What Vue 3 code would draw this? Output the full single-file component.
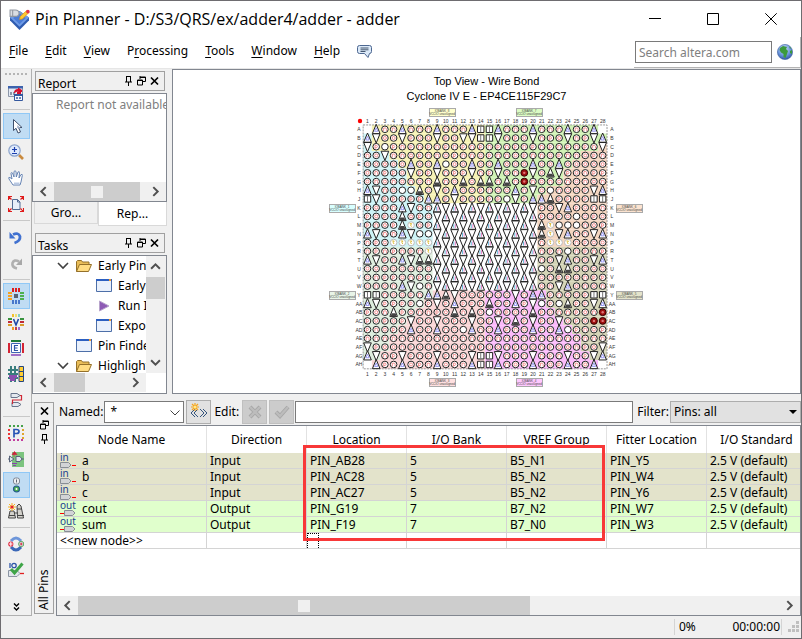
<script setup>
import { ref } from 'vue'

const menus = ['File', 'Edit', 'View', 'Processing', 'Tools', 'Window', 'Help'].map((label) => {
  const at = label === 'Processing' ? 1 : 0
  return { label, pre: label.slice(0, at), key: label[at], post: label.slice(at + 1) }
})

const toolGroups = [
  ['report'],
  ['pointer', 'zoom', 'hand', 'fit'],
  ['undo', 'redo'],
  ['package', 'vref', 'edges', 'pads', 'diff'],
  ['legend', 'dqs', 'banks', 'find'],
  ['refresh', 'check'],
]
const active = ['pointer', 'package', 'banks']

const columns = ['Node Name', 'Direction', 'Location', 'I/O Bank', 'VREF Group', 'Fitter Location', 'I/O Standard']
const nodes = [
  { dir: 'in', cells: ['a', 'Input', 'PIN_AB28', '5', 'B5_N1', 'PIN_Y5', '2.5 V (default)'] },
  { dir: 'in', cells: ['b', 'Input', 'PIN_AC28', '5', 'B5_N2', 'PIN_W4', '2.5 V (default)'] },
  { dir: 'in', cells: ['c', 'Input', 'PIN_AC27', '5', 'B5_N2', 'PIN_Y6', '2.5 V (default)'] },
  { dir: 'out', cells: ['cout', 'Output', 'PIN_G19', '7', 'B7_N2', 'PIN_W7', '2.5 V (default)'] },
  { dir: 'out', cells: ['sum', 'Output', 'PIN_F19', '7', 'B7_N0', 'PIN_W3', '2.5 V (default)'] },
]

const tree = [
  { icon: 'folder', open: true, depth: 0, text: 'Early Pin Planning' },
  { icon: 'window', depth: 1, text: 'Early Pin Planning...' },
  { icon: 'run', depth: 1, text: 'Run I/O Assignment Analysis' },
  { icon: 'window', depth: 1, text: 'Export Pin Assignments...' },
  { icon: 'window', depth: 0, text: 'Pin Finder...' },
  { icon: 'folder', open: true, depth: 0, text: 'Highlight Pins' },
]

const named = ref('*')
const filter = ref('Pins: all')
const edit = ref('')
const query = ref('')

/* Package map. o pin, O unused pin, A/V power and ground, B filled ground,
   S configuration, y clock, R assigned, X no ball */
const pinRows = {
  A: 'XAooAoooAoooASSAoooAoooAooAX',
  B: 'AVooVoooVooVVSSVoooVoooVooVA',
  C: 'VoOooooooooooooooooooooooooV',
  D: 'ooVooooooooooooooooooooooooo',
  E: 'oooooAooAOooAooAoooAooAooooo',
  F: 'oooooVooVoooVooVooRVoBVooooo',
  G: 'ooooooooBooBoBBoBoRooooooooo',
  H: 'AVooOOBoVoAooooooAoVoOooooVA',
  J: 'SVoooooAAoVoooooOVoAABooooSS',
  K: 'ooooAVoo------------ooVAoooo',
  L: 'ooooBooo------------ooooOooo',
  M: 'ooooByoo------------ByOOOooo',
  N: 'AVooAVOO------------ByVAooVA',
  P: 'oooyyyyy------------oyyyoooo',
  R: 'oooooooy------------oooOoooo',
  T: 'AVooAVBB------------ooVAooVA',
  U: 'oooooooo------------OoBBoooo',
  V: 'oooooooo------------oooooooo',
  W: 'ooooAVOo------------ooVAoooo',
  Y: 'SSoooooAABVooooooVoAAoooooSS',
  AA: 'AVooooOoVoAoooBooAoVOoOBooVA',
  AB: 'oooBooooooBoBoOooooBoooooooR',
  AC: 'oooooVooVoooVooVoBoVooVoooRR',
  AD: 'oooooAooAooOAooAoooAooAOoooo',
  AE: 'oooooooooooooooooooooooooooo',
  AF: 'VooooooooooooooooooooooooooV',
  AG: 'AVooVoooVoooVSSVoooVoooVooVA',
  AH: 'XAooAoooAoooASSAoooAoooAooAX',
}
/* [last column of the left bank, first column of the right bank] */
const edges = [
  [0, 29], [1, 29], [1, 28], [3, 26], [4, 25], [5, 24], [5, 24], [6, 22], [7, 21], [8, 21],
  [8, 21], [8, 21], [8, 21], [8, 21], [8, 21], [8, 21], [8, 21], [8, 21], [8, 21], [8, 22],
  [7, 22], [6, 23], [5, 24], [4, 25], [3, 26], [3, 26], [2, 27], [1, 28],
]
const pitch = 8.71
const x0 = 40.5
const y0 = 25.3
const names = Object.keys(pinRows)
const axis = Array.from({ length: 28 }, (_, i) => ({ n: i + 1, x: x0 + i * pitch }))
const sides = names.map((n, i) => ({ n, y: y0 + i * pitch }))

function bankOf(r, c) {
  const [l, rt] = edges[r]
  if (c <= l) return r < 14 ? 'b1' : 'b2'
  if (c >= rt) return r < 14 ? 'b6' : 'b5'
  if (r < 9) return c < 15 ? 'b8' : 'b7'
  if (r < 19) return 'core'
  return c < 15 ? 'b3' : 'b4'
}

const fills = []
const pins = []
names.forEach((name, r) => {
  let run = null
  for (let c = 1; c <= 28; c++) {
    let k = pinRows[name][c - 1]
    const x = x0 + (c - 1) * pitch
    const y = y0 + r * pitch
    const bank = k === 'X' ? 'core' : bankOf(r, c)
    if (run && run.bank === bank) run.w += pitch
    else {
      run = { bank, x: x - pitch / 2, y: y - pitch / 2, w: pitch }
      fills.push(run)
    }
    const core = k === '-'
    if (core) k = (r + c) % 2 === 0 ? 'A' : 'V'
    if (k !== 'X') pins.push({ k, core, x, y, v: (r * 5 + c * 3 + ((r * c) % 4)) % 3 })
  }
})

const tags = [
  { x: 102, y: 4, n: 8, fill: '#ffffcc' },
  { x: 189, y: 4, n: 7, fill: '#dcfcc4' },
  { x: 2, y: 100, n: 1, fill: '#d8ffff' },
  { x: 289, y: 100, n: 6, fill: '#fbe3d0' },
  { x: 2, y: 187, n: 2, fill: '#e8f4e8' },
  { x: 289, y: 187, n: 5, fill: '#e3e3cb' },
  { x: 102, y: 274, n: 3, fill: '#ffe0e0' },
  { x: 189, y: 274, n: 4, fill: '#ffc8ff' },
]
</script>

<template>
  <div class="window">
    <header class="titlebar">
      <svg class="app-icon" viewBox="0 0 20 20">
        <path d="M1 8 10 2l9 6v3l-9 9-9-9z" fill="#2f5cb0" />
        <path d="M1 8 10 2l9 6-9 9z" fill="#6f9be6" />
        <path d="M4 8.500 10 4l6 4.500-6 6z" fill="#4a7cd6" />
        <path d="M1 1h5q3.500 0 3.500 3T6 7H1zM9.500 4h3" fill="#d9dde3" stroke="#9096a0" />
        <path d="M3.500 1v6" stroke="#9096a0" />
        <path d="m10 10 .8-3 6-5.500 2 2-6 6z" fill="#ffc930" stroke="#d98d14" stroke-width=".6" />
        <circle cx="18" cy="2.500" r="1.700" fill="#e2334a" />
      </svg>
      <h1>Pin Planner - D:/S3/QRS/ex/adder4/adder - adder</h1>
      <div class="window-buttons">
        <button aria-label="Minimize"><svg viewBox="0 0 12 12"><path d="M0 5.500h12" /></svg></button>
        <button aria-label="Maximize"><svg viewBox="0 0 12 12"><path d="M.5.5h11v11H.5z" /></svg></button>
        <button aria-label="Close"><svg viewBox="0 0 12 12"><path d="m.3.3 11.4 11.4M11.7.3.3 11.7" /></svg></button>
      </div>
    </header>

    <div class="menubar">
      <nav>
        <a v-for="m in menus" :key="m.label" href="#">{{ m.pre }}<u>{{ m.key }}</u>{{ m.post }}</a>
        <button class="bubble" aria-label="Feedback">
          <svg viewBox="0 0 15 13">
            <path d="M2.500.5h10q2 0 2 2v4q0 2-2 2l-1.500 4-3.500-4h-5q-2 0-2-2v-4q0-2 2-2z" fill="#dbe9f8" stroke="#4d6790" />
            <path d="M3.500 3h8M3.500 4.800h8M3.500 6.500h5" stroke="#33465f" stroke-width=".9" />
          </svg>
        </button>
      </nav>
      <div class="search">
        <input v-model="query" type="text" placeholder="Search altera.com" aria-label="Search altera.com" />
        <button aria-label="Go">
          <svg viewBox="0 0 16 16">
            <defs>
              <radialGradient id="sea" cx=".45" cy=".3" r=".7">
                <stop offset="0" stop-color="#cfe0fb" />
                <stop offset=".6" stop-color="#6d97dc" />
                <stop offset="1" stop-color="#3057a4" />
              </radialGradient>
            </defs>
            <circle cx="8" cy="8" r="7.600" fill="url(#sea)" stroke="#3d5f9f" stroke-width=".6" />
            <path d="m3 4 3-2 4 1-1 2 2 2-1 3-1.500 4-2-1V10L4 8.500 2.500 6zM13 7l2-1v4l-2-1zM12 2l2 2-1 1z" fill="#3c9a3c" />
          </svg>
        </button>
      </div>
    </div>

    <main>
      <aside class="toolbar">
        <div class="grip"></div>
        <div v-for="(group, g) in toolGroups" :key="g" class="tool-group">
          <button v-for="t in group" :key="t" :class="{ on: active.includes(t) }" :aria-label="t">
            <svg v-if="t === 'report'" viewBox="0 0 16 16">
              <path d="M.5 1.500h14v10H.5z" fill="#e4eaf4" stroke="#8c96a8" />
              <path d="M0 1h15v2.500H0z" fill="#3c62ad" />
              <path d="M2 7h2v3H2zM5 7h2v3H5z" fill="#8c96a8" />
              <path d="M6 8q0-4 4-4V2.500L14 5v2h-1v2H9V7h2q-3-1-4 1z" fill="#d5102e" />
              <path d="M6.500 9.500h8v6h-8z" fill="#f6f8fb" stroke="#34589e" />
              <path d="M6 9h9v2H6z" fill="#34589e" /><path d="M8 12h2v2H8zM11 12h2v2h-2z" fill="#6b85ba" />
            </svg>
            <svg v-else-if="t === 'pointer'" viewBox="0 0 16 16">
              <path d="M5.500 1.500v11l2.500-2.200 2 4.700 2.500-1-2-4.500H14z" fill="#fff" stroke="#40506c" />
              <path d="M9 10h3.500L9.500 7z" fill="#a4b2cb" />
            </svg>
            <svg v-else-if="t === 'zoom'" viewBox="0 0 16 16">
              <path d="m11 11 4 4" stroke="#c98a3e" stroke-width="2.600" />
              <circle cx="6.500" cy="6.500" r="5.700" fill="#dfeafc" stroke="#8ca4cc" stroke-width="1.200" />
              <path d="M6.500 3v5M4 5.500h5M4 9.500h5" stroke="#1a3fae" stroke-width="1.200" />
            </svg>
            <svg v-else-if="t === 'hand'" viewBox="0 0 16 16">
              <path d="M5 15 1 9q-1-2 1-1.500L4 9 3 3.500q0-1.500 1.500-.5L6 7V1.500Q7 0 8 1.500L8.300 7 10 2q1.500-1 1.500.7L11 8l2-3.500q1.700-.5 1.300 1L13 12l-1 3z" fill="#fff" stroke="#6684b4" />
              <path d="M6 13.500h5.500" stroke="#b9c8e2" stroke-width="2" />
            </svg>
            <svg v-else-if="t === 'fit'" viewBox="0 0 16 16">
              <path d="M4.500 3.500h5l2.500 2.500v7.500H4.500z" fill="#e8eff9" stroke="#536b93" />
              <path d="M9.500 3.500V6H12" stroke="#536b93" />
              <path d="M.5 4V.5H4M12 .5h3.500V4M15.500 12v3.500H12M4 15.500H.5V12M.5.5l3 3M15.500.5l-3 3M15.500 15.500l-3-3M.5 15.500l3-3" stroke="#e01b1b" stroke-width="1.200" />
            </svg>
            <svg v-else-if="t === 'undo'" viewBox="0 0 16 16">
              <path d="M6.500 14q6-2 5.500-6.500Q10.500 3 5 5.500" stroke="#4071d0" stroke-width="2.800" />
              <path d="M1.500 3v6.500h6z" fill="#4071d0" />
            </svg>
            <svg v-else-if="t === 'redo'" viewBox="0 0 16 16">
              <path d="M9 13.500Q3.500 12 4.500 8 6 4 11 6.500" stroke="#b0b0b0" stroke-width="2.600" />
              <path d="M14 3.500V10H8z" fill="#a8a8a8" />
            </svg>
            <svg v-else-if="t === 'package'" viewBox="0 0 16 16">
              <path d="M5 0v4M8 0v4M11 0v4" stroke="#e01c1c" stroke-width="2" />
              <path d="M5 12v4M8 12v4M11 12v4" stroke="#4878cc" stroke-width="2" />
              <path d="M0 5h4M0 8h4M0 11h4" stroke="#f5a020" stroke-width="2" />
              <path d="M12 5h4M12 8h4M12 11h4" stroke="#4db04d" stroke-width="2" />
              <path d="M6 6h4v4H6z" fill="#5a6270" />
            </svg>
            <svg v-else-if="t === 'vref'" viewBox="0 0 16 16">
              <path d="M5 0v3" stroke="#f3c12c" stroke-width="2" /><path d="M8 0v3" stroke="#ecdf70" stroke-width="2" />
              <path d="M11 0v3" stroke="#83cfc4" stroke-width="2" /><path d="M5 13v3" stroke="#f09828" stroke-width="2" />
              <path d="M8 13v3" stroke="#c84040" stroke-width="2" /><path d="M11 13v3" stroke="#a06ad0" stroke-width="2" />
              <path d="M0 5h4M12 5h4" stroke="#39933d" stroke-width="2" /><path d="M0 8h4M12 8h4" stroke="#c02a38" stroke-width="2" />
              <path d="M0 11h4M12 11h4" stroke="#d99b2b" stroke-width="2" />
              <path d="m5.500 5 2.500 6 2.500-6" stroke="#1d47a8" stroke-width="1.600" />
            </svg>
            <svg v-else-if="t === 'edges'" viewBox="0 0 16 16">
              <path d="M3 0h10v2H3z" fill="#1e7b36" /><path d="M3 14h10v2H3z" fill="#a070c8" />
              <path d="M0 3h2v10H0z" fill="#d42434" /><path d="M14 3h2v10h-2z" fill="#d42434" />
              <path d="M3.500 3.500h9v9h-9z" fill="#fff" stroke="#3f66b5" />
              <path d="M10 5.500H6.500v5H10M6.500 8h3" stroke="#2e54a4" stroke-width="1.200" />
            </svg>
            <svg v-else-if="t === 'pads'" viewBox="0 0 16 16">
              <path d="M3 0v16M7 0v16M0 4h10M0 8h10M0 12h10" stroke="#387d7d" stroke-width="2" />
              <path d="M1 9h8v3H7v3H2v-3H1z" fill="#8a4fae" />
              <path d="M11 .5h4.500v15H11z" fill="#ffce34" stroke="#24457f" /><path d="M11 5.500h5M11 10.500h5" stroke="#24457f" />
            </svg>
            <svg v-else-if="t === 'diff'" viewBox="0 0 16 16">
              <path d="M3 1.500h6l3 2-3 2H3zM4 10.500h6l3 2-3 2H4z" fill="#e4e8ef" stroke="#69758c" />
              <path d="M12 3.500h1.500V8h-9v4" stroke="#cf2734" stroke-width="1.200" />
            </svg>
            <svg v-else-if="t === 'legend'" viewBox="0 0 16 16">
              <path d="M1 1h14" stroke="#45a049" stroke-width="2" stroke-dasharray="2 2" />
              <path d="M1 15h14" stroke="#c23ea0" stroke-width="2" stroke-dasharray="2 2" />
              <path d="M1 4v10" stroke="#e33" stroke-width="2" stroke-dasharray="2 2" />
              <path d="M15 4v10" stroke="#e0a52c" stroke-width="2" stroke-dasharray="2 2" />
              <path d="M6 12.500V4.500h2.500q2.500 0 2.500 2T8.500 8.500H6" stroke="#2755b5" stroke-width="1.700" />
            </svg>
            <svg v-else-if="t === 'dqs'" viewBox="0 0 16 16">
              <path d="M4 1h12v15H4z" fill="#7cc47f" /><path d="M0 8h4M13 8h3" stroke="#59647a" />
              <path d="M1.500 5v6L6 8zM8 5.500h4l2 2.500-2 2.500H8z" fill="#dfe5ee" stroke="#59647a" />
              <path d="M4 3.500 6.500.5 9 3.500zM6 3v3" fill="#d01f3c" stroke="#d01f3c" stroke-width=".6" /><path d="M4 12.500h5M5 14.500h3" stroke="#8a3fb0" />
            </svg>
            <svg v-else-if="t === 'banks'" viewBox="0 0 16 16">
              <rect x="5.500" y="1" width="6" height="6" rx="2" fill="#eef0f3" stroke="#7f8794" />
              <path d="M8.500 2.500v3" stroke="#5d6673" />
              <circle cx="8.500" cy="12" r="3" fill="#4bb04f" stroke="#245a8c" stroke-width="1.200" /><circle cx="8.500" cy="12" r="1" fill="#fff" />
            </svg>
            <svg v-else-if="t === 'find'" viewBox="0 0 16 16">
              <path d="M2 8h4l1.500 7H.5zM9 3l2-2 2 2 2.500 12h-6z" fill="#d4d2cc" stroke="#454545" />
              <path d="M1 12.500h6M9.500 12.500H16M6 10h4M9 6h5" stroke="#454545" stroke-width="1.200" />
              <path d="M4 0v8M0 4h8M1 1l6 6M7 1 1 7" stroke="#f5b120" /><circle cx="4" cy="4" r="1.600" fill="#e8202c" />
            </svg>
            <svg v-else-if="t === 'refresh'" viewBox="0 0 16 16">
              <path d="M3 5q5-6 10 0" stroke="#6d96da" stroke-width="3" />
              <path d="M13 11q-5 6-10 0" stroke="#3b68b8" stroke-width="3" />
              <circle cx="2.800" cy="8" r="2.600" fill="#e12f45" /><circle cx="13.200" cy="8" r="2.600" fill="#e8eef8" stroke="#57a35c" />
              <path d="M2.800 6v4M1 8h3.600" stroke="#fff" /><path d="M11.700 8h3M13.200 6.500v3" stroke="#d02b3c" />
            </svg>
            <svg v-else viewBox="0 0 16 16">
              <path d="M2 1v5" stroke="#2d55a8" stroke-width="1.300" /><circle cx="6" cy="3.500" r="2.200" stroke="#2d55a8" stroke-width="1.300" />
              <path d="M.5 8.500H9l3 3-3 3H.5z" fill="#e2e6ec" stroke="#8b94a3" /><path d="M12 11.500h4" stroke="#e02020" stroke-width="1.300" />
              <path d="m3 7 3.500 4L14.500 1.500" stroke="#3fa548" stroke-width="3" />
            </svg>
          </button>
        </div>
        <button class="more" aria-label="More tools"><svg viewBox="0 0 7 8"><path d="m1 .5 2.500 2.500L6 .5M1 4.500 3.500 7 6 4.500" /></svg></button>
      </aside>

      <div class="workspace">
        <div class="upper">
          <div class="docks">
            <section class="dock">
              <header class="dock-title">
                <h2>Report</h2>
                <button aria-label="Pin"><svg viewBox="0 0 9 10"><path d="M2.500 0v6M1 6h7M6.500 0v6M2 .5h5M4.500 6v4" /></svg></button>
                <button aria-label="Float"><svg viewBox="0 0 9 10"><path d="M3 1h5.500v4.500H6M3 0v3M3 1.500h5.500M.5 4h5v5H.5zM.5 4.500h5" /></svg></button>
                <button aria-label="Close"><svg viewBox="0 0 9 10"><path d="m1 1.500 7 7M8 1.500l-7 7" stroke-width="1.700" /></svg></button>
              </header>
              <div class="panel report">
                <p>Report not available</p>
                <div class="scroll-h">
                  <svg class="arrow" viewBox="0 0 10 10"><path d="M7 1 3 5l4 4" /></svg>
                  <div class="thumb"><i></i></div>
                  <svg class="arrow" viewBox="0 0 10 10"><path d="m3 1 4 4-4 4" /></svg>
                </div>
              </div>
              <div class="tabs">
                <button>Gro...</button>
                <button class="current">Rep...</button>
              </div>
            </section>

            <section class="dock tasks">
              <header class="dock-title">
                <h2>Tasks</h2>
                <button aria-label="Pin"><svg viewBox="0 0 9 10"><path d="M2.500 0v6M1 6h7M6.500 0v6M2 .5h5M4.500 6v4" /></svg></button>
                <button aria-label="Float"><svg viewBox="0 0 9 10"><path d="M3 1h5.500v4.500H6M3 0v3M3 1.500h5.500M.5 4h5v5H.5zM.5 4.500h5" /></svg></button>
                <button aria-label="Close"><svg viewBox="0 0 9 10"><path d="m1 1.500 7 7M8 1.500l-7 7" stroke-width="1.700" /></svg></button>
              </header>
              <div class="panel tree-panel">
                <ul>
                  <li v-for="(n, i) in tree" :key="i" :class="{ child: n.depth }">
                    <span class="twist"><svg v-if="n.open" viewBox="0 0 12 8"><path d="m1 1 5 5 5-5" /></svg></span>
                    <svg v-if="n.icon === 'folder'" class="node-icon" viewBox="0 0 16 16">
                      <path d="M.5 13.500v-10l1-1h4l1 1.500h6.500v3" fill="#e9bd58" stroke="#94702a" />
                      <path d="m.5 13.500 3-7h12l-3 7z" fill="#ffdc82" stroke="#94702a" />
                    </svg>
                    <svg v-else-if="n.icon === 'window'" class="node-icon" viewBox="0 0 16 16">
                      <path d="M.5 1.500h15v12H.5z" fill="#e9f0fb" stroke="#4d6fa8" />
                      <path d="M0 1h16v2H0z" fill="#2c5fc0" /><path d="M13 1h2v2h-2z" fill="#f39a2b" />
                    </svg>
                    <svg v-else class="node-icon" viewBox="0 0 16 16"><path d="M3.500 3v10L13 8z" fill="#8e5bb5" stroke="#b8a4cc" /></svg>
                    {{ n.text }}
                  </li>
                </ul>
                <div class="scroll-v">
                  <svg class="arrow" viewBox="0 0 10 10"><path d="m1 7 4-4 4 4" /></svg>
                  <div class="thumb"></div>
                  <svg class="arrow" viewBox="0 0 10 10"><path d="m1 3 4 4 4-4" /></svg>
                </div>
                <div class="scroll-h">
                  <svg class="arrow" viewBox="0 0 10 10"><path d="M7 1 3 5l4 4" /></svg>
                  <div class="thumb"></div>
                  <svg class="arrow" viewBox="0 0 10 10"><path d="m3 1 4 4-4 4" /></svg>
                </div>
              </div>
            </section>
          </div>

          <section class="chip">
            <p>Top View - Wire Bond</p>
            <p>Cyclone IV E - EP4CE115F29C7</p>
            <svg class="package" viewBox="0 0 320 285" role="img" aria-label="Package pin map">
              <rect v-for="(f, i) in fills" :key="i" :x="f.x" :y="f.y" :width="f.w" :height="pitch" :class="f.bank" />
              <g class="labels">
                <template v-for="a in axis" :key="a.n">
                  <text :x="a.x" y="19">{{ a.n }}</text>
                  <text :x="a.x" y="272">{{ a.n }}</text>
                </template>
                <template v-for="s in sides" :key="s.n">
                  <text x="32" :y="s.y + 2">{{ s.n }}</text>
                  <text x="285" :y="s.y + 2">{{ s.n }}</text>
                </template>
              </g>
              <rect :x="x0 - pitch / 2" :y="y0 - pitch / 2" :width="pitch * 28" :height="pitch * 28" class="outline" />
              <g v-for="(p, i) in pins" :key="i" :transform="`translate(${p.x} ${p.y})`">
                <template v-if="p.k === 'A' || p.k === 'B'">
                  <path d="M0-5 3.800 4.200h-7.600z" class="tri" />
                  <path v-if="p.k === 'B'" d="M-2 1h4l1 3h-6z" fill="#444" />
                  <path v-else-if="p.core" d="M-.8-1v4" stroke="#6bd" />
                  <path v-else d="M0-1.500 1.600 2h-3.200z" class="blue" />
                  <path v-if="p.core" d="M.8-1v4" stroke="#e8c" />
                </template>
                <path v-else-if="p.k === 'V'" d="M0 5-3.800-4.200h7.600z" class="tri" />
                <g v-else-if="p.k === 'S'">
                  <path d="M-3.200-3.200h6.400v6.400h-6.400z" fill="#fff" stroke="#222" /><path d="M0-3v6" stroke="#777" />
                </g>
                <g v-else-if="p.k === 'R'">
                  <circle r="3.400" fill="#a01010" stroke="#300" /><circle r="1.200" fill="#d77" />
                </g>
                <g v-else>
                  <circle r="3.300" :class="p.k === 'y' ? 'clock' : 'pin'" />
                  <path v-if="p.k === 'o' && p.v === 0" d="M-1.300 1.800V-1.300H.6q.9.200.9 1.200v1.900" class="red" />
                  <path v-else-if="p.k === 'o' && p.v === 1" d="M-1.200 2.200v-3.600h1.600q1.500 1.300 0 2.400h-1.300" class="red" />
                  <circle v-else-if="p.k === 'o'" r="1.500" class="red" />
                  <path v-else-if="p.k === 'y'" d="M-1.400-1.500h2l-1 1.500.8 1.500" stroke="#db3" fill="none" />
                </g>
              </g>
              <circle cx="33" cy="17" r="2.200" fill="#f00" />
              <g v-for="t in tags" :key="t.n" :transform="`translate(${t.x} ${t.y})`" class="tag">
                <rect x=".5" y=".5" width="26" height="8" :fill="t.fill" />
                <text x="13" y="4">IOBANK_{{ t.n }}</text>
                <text x="13" y="7">VCCIO unassigned</text>
              </g>
            </svg>
          </section>
        </div>

        <section class="lower">
          <header class="side-title">
            <button aria-label="Close"><svg viewBox="0 0 9 10"><path d="m1 1.500 7 7M8 1.500l-7 7" stroke-width="1.700" /></svg></button>
            <button aria-label="Float"><svg viewBox="0 0 9 10"><path d="M3 1h5.500v4.500H6M3 0v3M3 1.500h5.500M.5 4h5v5H.5zM.5 4.500h5" /></svg></button>
            <button aria-label="Pin"><svg viewBox="0 0 9 10"><path d="M2.500 0v6M1 6h7M6.500 0v6M2 .5h5M4.500 6v4" /></svg></button>
            <h2>All Pins</h2>
          </header>
          <div class="pins">
            <form class="filters" @submit.prevent>
              <label for="named">Named:</label>
              <span class="combo named">
                <select id="named" v-model="named"><option>*</option></select>
                <svg viewBox="0 0 10 6"><path d="m.5.5 4.500 4.500L9.500.5" fill="none" stroke="#444" /></svg>
              </span>
              <button type="button" class="square" aria-label="Node finder">
                <svg viewBox="0 0 18 18">
                  <path d="m8 6-4 4 4 4M5 6l-4 4 4 4M10 6l4 4-4 4M13 6l4 4-4 4" fill="none" stroke="#35557e" />
                  <path d="M5 0v8M1 4h8M2 1l6 6M8 1 2 7" stroke="#f7a51c" stroke-width="1.200" /><circle cx="5" cy="4" r="1.500" fill="#ffe98a" />
                </svg>
              </button>
              <label for="edit" class="edit-label">Edit:</label>
              <button type="button" class="square off" disabled aria-label="Cancel edit">
                <svg viewBox="0 0 18 18"><path d="m4 4 10 10M14 4 4 14" stroke="#a6a6a6" stroke-width="4" /><path d="m4 4 10 10M14 4 4 14" stroke="#bcbcbc" stroke-width="2.400" /></svg>
              </button>
              <button type="button" class="square off" disabled aria-label="Accept edit">
                <svg viewBox="0 0 18 18"><path d="m3 9 4 4 8-9" fill="none" stroke="#a6a6a6" stroke-width="4" /><path d="m3 9 4 4 8-9" fill="none" stroke="#bcbcbc" stroke-width="2.400" /></svg>
              </button>
              <input id="edit" v-model="edit" type="text" />
              <label for="filter">Filter:</label>
              <span class="combo filter">
                <select id="filter" v-model="filter"><option>Pins: all</option></select>
                <svg viewBox="0 0 8 4"><path d="M0 0h8L4 4z" /></svg>
              </span>
            </form>

            <div class="grid">
              <div class="table-area">
                <table>
                  <thead>
                    <tr><th v-for="c in columns" :key="c">{{ c }}</th></tr>
                  </thead>
                  <tbody>
                    <tr v-for="n in nodes" :key="n.cells[0]" :class="n.dir">
                      <td v-for="(c, i) in n.cells" :key="i">
                        <span v-if="i === 0" class="node">
                          <svg v-if="n.dir === 'in'" viewBox="0 0 17 15">
                            <text x="0" y="8">in</text>
                            <path d="M.5 9.500h8l2.500 2.500-2.500 2.500h-8z" fill="#d2d4d6" stroke="#888e94" /><path d="M12 12.500h4" stroke="#f00" />
                          </svg>
                          <svg v-else viewBox="0 0 17 15">
                            <text x="0" y="8">out</text>
                            <path d="M4.500 9.500h8L15 12l-2.500 2.500h-8z" fill="#d2d4d6" stroke="#888e94" /><path d="M0 12.500h4" stroke="#f00" />
                          </svg>
                          {{ c }}
                        </span>
                        <template v-else>{{ c }}</template>
                      </td>
                    </tr>
                    <tr class="new">
                      <td>&lt;&lt;new node&gt;&gt;</td><td></td><td><i class="caret"></i></td><td></td><td></td><td></td><td></td>
                    </tr>
                  </tbody>
                </table>
                <div class="highlight"></div>
              </div>
              <div class="scroll-h">
                <svg class="arrow" viewBox="0 0 10 10"><path d="M7 1 3 5l4 4" /></svg>
                <div class="thumb"><i></i></div>
                <svg class="arrow" viewBox="0 0 10 10"><path d="m3 1 4 4-4 4" /></svg>
              </div>
            </div>
          </div>
        </section>
      </div>
    </main>

    <footer>
      <div class="progress"><span>0%</span><span>00:00:00</span></div>
      <svg viewBox="0 0 12 12"><path d="M8 0h3v3H8zM4 4h3v3H4zM8 4h3v3H8zM0 8h3v3H0zM4 8h3v3H4zM8 8h3v3H8z" fill="#bfbfbf" /></svg>
    </footer>
  </div>
</template>

<style>
body {
  margin: 0;
}
</style>

<style scoped>
* {
  box-sizing: border-box;
}
.window {
  display: flex;
  flex-direction: column;
  height: 100vh;
  min-height: 600px;
  overflow: hidden;
  border: 1px solid #6e6c70;
  background: #f0f0f0;
  color: #000;
  font: 12px/16px "Noto Sans", "Open Sans", sans-serif;
}
button,
input,
select {
  margin: 0;
  padding: 0;
  font: inherit;
  color: inherit;
}
button {
  border: 0;
  background: none;
}
svg {
  display: block;
}
h1,
h2,
p,
ul {
  margin: 0;
  padding: 0;
  font-weight: 400;
}
.titlebar {
  display: flex;
  align-items: center;
  height: 36px;
  padding: 0 1px 0 8px;
  background: #fff;
}
.app-icon {
  width: 21px;
  height: 21px;
  margin-right: 5px;
}
h1 {
  flex: 1;
  font-family: "Open Sans", "Noto Sans", sans-serif;
  font-size: 16px;
  line-height: 24px;
  white-space: nowrap;
}
.window-buttons {
  display: flex;
}
.window-buttons button {
  display: grid;
  place-items: center;
  width: 58px;
  height: 36px;
}
.window-buttons svg {
  width: 12px;
  height: 12px;
  fill: none;
  stroke: #000;
}
.menubar {
  display: flex;
  justify-content: space-between;
  height: 32px;
  background: #fff;
  border-bottom: 1px solid #e6e6e6;
}
.menubar nav {
  display: flex;
  gap: 17px;
  height: 28px;
  align-items: center;
  padding-left: 8px;
}
.menubar a {
  color: #000;
  text-decoration: none;
}
u {
  text-underline-offset: 2px;
}
.bubble svg {
  width: 15px;
  height: 13px;
}
.search {
  display: flex;
  align-items: center;
  gap: 5px;
  padding: 0 7px 0 1px;
  border-right: 1px solid #b4b4b4;
  border-bottom: 1px solid #b4b4b4;
}
.search input {
  width: 137px;
  height: 22px;
  padding: 0 3px;
  border: 1px solid #7a7a7a;
}
.search input::placeholder {
  color: #808080;
  opacity: 1;
}
.search svg {
  width: 16px;
  height: 16px;
}
main {
  flex: 1;
  display: flex;
  min-height: 0;
}
.toolbar {
  display: flex;
  flex-direction: column;
  flex: none;
  width: 31px;
  padding: 4px 1px 0 2px;
  border-right: 1px solid #b0b0b0;
  border-bottom: 1px solid #b0b0b0;
}
.grip {
  height: 2px;
  margin: 0 3px 5px 2px;
  background: repeating-linear-gradient(90deg, #b4b4b4 0 2px, transparent 2px 4px);
}
.tool-group + .tool-group {
  padding-top: 3px;
  margin-top: 3px;
  border-top: 1px solid #c8c8c8;
}
.tool-group button {
  display: grid;
  place-items: center;
  width: 27px;
  height: 26px;
  padding-right: 1px;
  border: 1px solid transparent;
}
.tool-group button.on {
  background: #c0dcf3;
  border-color: #90c8f6;
}
.tool-group svg {
  width: 16px;
  height: 16px;
  fill: none;
}
.more {
  margin: auto auto 4px;
}
.more svg {
  width: 7px;
  height: 8px;
  fill: none;
  stroke: #000;
  stroke-width: 1.4;
}
.workspace {
  flex: 1;
  display: flex;
  flex-direction: column;
  min-width: 0;
}
.upper {
  display: flex;
  flex: none;
  gap: 5px;
}
.docks {
  flex: none;
  width: 135px;
  padding-top: 2px;
}
.dock-title {
  display: flex;
  align-items: center;
  gap: 4px;
  height: 20px;
  margin: 0 2px 0 3px;
  padding: 0 5px 0 2px;
  border: 1px solid #a0a0a0;
}
h2 {
  flex: 1;
  font-size: 12px;
}
.dock-title h2 {
  padding-top: 6px;
}
.dock-title svg,
.side-title svg {
  width: 9px;
  height: 10px;
  fill: none;
  stroke: #000;
}
.panel {
  margin-top: 2px;
  border: 1px solid #828790;
  background: #fff;
}
.report {
  display: flex;
  flex-direction: column;
  height: 109px;
}
.report p {
  flex: 1;
  padding: 3px 0 0 23px;
  color: #808080;
  white-space: nowrap;
  overflow: hidden;
}
.scroll-h {
  display: flex;
  height: 19px;
  background: #f0f0f0;
}
.scroll-h .arrow {
  flex: none;
  width: 21px;
  height: 19px;
  padding: 4px 5px;
}
.arrow {
  fill: none;
  stroke: #505050;
  stroke-width: 1.8;
}
.scroll-h .thumb {
  display: grid;
  place-items: center;
  background: #cdcdcd;
}
.thumb i {
  width: 12px;
  height: 12px;
  background: #f0f0f0;
}
.report .thumb {
  flex: 1;
  margin-right: 5px;
}
.tabs {
  display: flex;
  height: 31px;
  padding-left: 2px;
  align-items: flex-start;
}
.tabs button {
  width: 64px;
  height: 22px;
  border: 1px solid #d9d9d9;
  border-top: 0;
}
.tabs .current {
  flex: 1;
  height: 24px;
  background: #fff;
}
.tree-panel {
  display: grid;
  grid-template-columns: 1fr 20px;
  grid-template-rows: 117px 20px;
}
ul {
  list-style: none;
  overflow: hidden;
}
li {
  display: flex;
  align-items: center;
  height: 20px;
  padding-left: 22px;
  white-space: nowrap;
}
.child {
  padding-left: 42px;
}
.twist {
  flex: none;
  width: 21px;
  padding: 0 7px 0 2px;
}
.twist svg {
  width: 12px;
  height: 8px;
  fill: none;
  stroke: #404040;
  stroke-width: 1.6;
}
.node-icon {
  flex: none;
  width: 16px;
  height: 16px;
  margin-right: 6px;
}
.scroll-v {
  display: flex;
  flex-direction: column;
  justify-content: space-between;
  padding-right: 1px;
  background: #f0f0f0;
}
.scroll-v .arrow {
  width: 19px;
  height: 21px;
  padding: 5px 4px;
}
.scroll-v .thumb {
  height: 22px;
  margin-bottom: auto;
  background: #cdcdcd;
}
.tree-panel .scroll-h .thumb {
  width: 31px;
  margin-right: auto;
}
.chip {
  flex: 1;
  min-width: 0;
  display: flex;
  flex-direction: column;
  align-items: center;
  height: 325px;
  padding-top: 4px;
  border: 1px solid #828790;
  background: #fff;
  overflow: hidden;
}
.chip p {
  font: 11px/15px "Liberation Sans", Arial, sans-serif;
}
.package {
  flex: none;
  width: 320px;
  height: 285px;
}
.b1 { fill: #cdf3f6; }
.b2 { fill: #deeede; }
.b3 { fill: #fad6d6; }
.b4 { fill: #fabafa; }
.b5 { fill: #d4d4b6; }
.b6 { fill: #f4d6c0; }
.b7 { fill: #cff2b4; }
.b8 { fill: #f6f2b4; }
.core { fill: #fff; }
.outline {
  fill: none;
  stroke: #999;
  stroke-dasharray: 2 1;
}
.labels text {
  font: 5px "Liberation Sans", Arial, sans-serif;
  text-anchor: middle;
  fill: #333;
}
.tri {
  fill: #fff;
  stroke: #222;
  stroke-width: 1;
}
.blue {
  fill: #fff;
  stroke: #77e;
  stroke-width: 0.7;
}
.pin {
  fill: #fff;
  stroke: #222;
}
.clock {
  fill: #fff;
  stroke: #bbb;
}
.red {
  fill: none;
  stroke: #f07878;
  stroke-width: 0.8;
}
.tag rect {
  stroke: #aaa;
}
.tag text {
  font: 3px "Liberation Sans", Arial, sans-serif;
  text-anchor: middle;
  fill: #444;
}
.lower {
  flex: 1;
  display: flex;
  min-height: 0;
  padding-top: 5px;
}
.side-title {
  flex: none;
  display: flex;
  flex-direction: column;
  align-items: center;
  gap: 4px;
  width: 20px;
  margin: 3px 2px 2px;
  padding: 3px 0;
  border: 1px solid #a0a0a0;
}
.side-title h2 {
  display: flex;
  align-items: center;
  writing-mode: vertical-rl;
  transform: rotate(180deg);
}
.pins {
  flex: 1;
  min-width: 0;
  display: flex;
  flex-direction: column;
}
.filters {
  display: flex;
  align-items: center;
  height: 26px;
  padding-left: 3px;
}
.combo {
  position: relative;
  height: 22px;
}
.combo select {
  width: 100%;
  height: 100%;
  padding: 0 5px;
  border: 1px solid #7a7a7a;
  border-radius: 0;
  background: #fff;
  appearance: none;
}
.combo svg {
  position: absolute;
  right: 4px;
  top: 9px;
  width: 10px;
  height: 6px;
  pointer-events: none;
}
.named {
  width: 80px;
}
.filter {
  width: 131px;
}
.combo.filter select {
  padding: 0 3px;
  border-color: #adadad;
  background: #e1e1e1;
}
.filter svg {
  width: 8px;
  height: 4px;
}
.filters label {
  margin-right: 1px;
}
.filters .edit-label {
  margin-left: 3px;
}
.square {
  display: grid;
  place-items: center;
  width: 25px;
  height: 24px;
  margin-left: 2px;
  border: 1px solid #adadad;
  background: #e1e1e1;
}
.square.off {
  border-color: #bfbfbf;
  background: #ccc;
}
.square svg {
  width: 18px;
  height: 18px;
}
.filters input {
  flex: 1;
  min-width: 0;
  height: 22px;
  margin: 0 4px 0 1px;
  border: 1px solid #7a7a7a;
}
.grid {
  flex: 1;
  display: flex;
  flex-direction: column;
  min-height: 0;
  border: 1px solid #828790;
  background: #fff;
}
.table-area {
  position: relative;
  flex: 1;
  overflow: hidden;
}
table {
  width: 750px;
  table-layout: fixed;
  border-collapse: separate;
  border-spacing: 0;
}
th {
  width: 100px;
  height: 27px;
  padding: 0;
  border-right: 1px solid #e2e2e2;
  font-weight: 400;
}
th:first-child {
  width: 150px;
}
td {
  height: 16px;
  padding: 0 0 0 3px;
  border-right: 1px solid #d4d4d4;
  border-bottom: 1px solid #d4d4d4;
  line-height: 15px;
  white-space: nowrap;
}
.in td {
  background: #e3e3cb;
}
.out td {
  background: #e0ffcc;
}
.node {
  display: flex;
  gap: 5px;
}
.node svg {
  width: 17px;
  height: 15px;
  overflow: visible;
}
.node text {
  font: 10px "Noto Sans", sans-serif;
  fill: #1c3f8f;
}
.caret {
  display: block;
  width: 12px;
  height: 15px;
  margin-left: -3px;
  border: 1px dotted #000;
  border-bottom: 0;
}
.highlight {
  position: absolute;
  left: 246px;
  top: 19px;
  width: 302px;
  height: 96px;
  border: 3px solid #f83838;
}
.grid .thumb {
  width: 452px;
  margin-right: auto;
}
footer {
  display: flex;
  justify-content: flex-end;
  align-items: center;
  gap: 6px;
  height: 22px;
  padding-right: 1px;
}
.progress {
  display: flex;
  justify-content: space-between;
  width: 108px;
  padding: 0 1px 0 4px;
  border: solid #d4d4d4;
  border-width: 0 1px;
}
footer svg {
  width: 12px;
  height: 12px;
}
</style>
